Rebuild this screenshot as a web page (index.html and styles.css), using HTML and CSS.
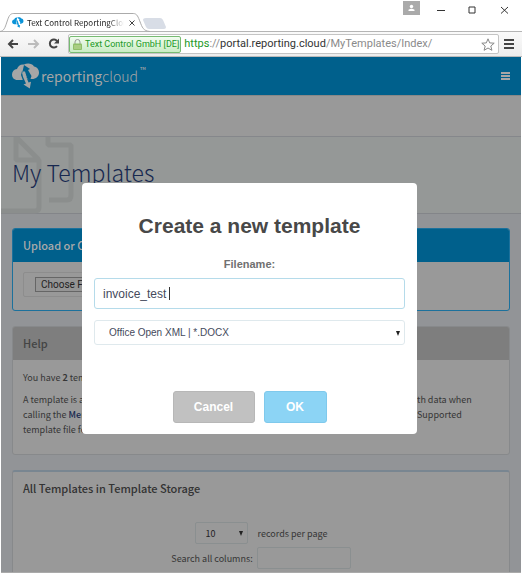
FILE: index.html
```html
<!DOCTYPE html>
<html lang="en">
<head>
<meta charset="utf-8">
<title>Text Control ReportingCloud</title>
<link rel="stylesheet" href="styles.css">
</head>
<body>
<svg class="defs" aria-hidden="true">
  <symbol id="logo" viewBox="0 0 28 26">
    <path d="M5.500 17 C2 17 0 14.500 0 11.500 C0 8.500 2 6.300 5 6 C6 3 8.500 1 12 1.500 C15 0 20 0 22 3.500 C25 4 27 6.500 27 9.500 C27 13.500 24 16 20 16 H17 L14 17Z"/>
    <path fill="currentColor" d="M10.500 8.500 L12 2 L18 6 L16 7 L19.500 13 L18 17.500 L15 15 L13 8.500Z"/>
    <path fill="currentColor" d="M11 17.500 L9 12 L10 8 L13.500 13 L17 17.500Z"/>
    <path d="M10 9.500 L12 9 L14 13 L16.500 19.500 L19 18.800 L17.800 25.500 L11.500 21.500 L14 20.500 L11 14Z"/>
  </symbol>
</svg>
<header class="browser">
  <div class="tabs">
    <div class="tab">
      <svg class="tab-shape" viewBox="0 0 152 19" preserveAspectRatio="none"><path d="M0 18.500 C4 18 5 15 7 9 S10 .5 14 .5 H135 C139 .5 140 4 142 9 S145 18 152 18.500"/></svg>
      <svg class="tab-logo"><use href="#logo"/></svg>
      <span class="tab-name">Text Control ReportingCloud</span>
      <svg class="tab-close" viewBox="0 0 6 6"><path d="M.5 .5 L5.500 5.500 M5.500 .5 L.5 5.500"/></svg>
    </div>
    <svg class="newtab" viewBox="0 0 23 11"><path d="M3 0 H17 Q19 0 20 2 L23 9 Q23 11 21 11 H6 Q4 11 3 9 L0 2 Q0 0 3 0"/></svg>
    <div class="window">
      <svg class="person" viewBox="0 0 17 14"><rect width="17" height="14"/><circle cx="8.500" cy="5.500" r="1.700"/><path d="M5.500 10 V8.800 Q8.500 6.500 11.500 8.800 V10Z"/></svg>
      <svg class="controls" viewBox="0 0 73 8"><path d="M0 4.500 H8 M32 1 H38 V7 H32Z M64 1 L71 7.500 M71 1 L64 7.500"/></svg>
    </div>
  </div>
  <div class="toolbar">
    <svg class="nav" viewBox="0 0 54 14"><path class="dark" d="M11 7 H2 M6 3 L2 7 L6 11"/><path class="pale" d="M21 7 H31 M27 3 L31 7 L27 11"/><path class="dark" d="M50 4 A4 4 0 1 0 50 9"/><path class="fill" d="M47 6.500 H52 V1.500Z"/></svg>
    <div class="address">
      <div class="cert"><svg class="lock" viewBox="0 0 9 11"><path class="shackle" d="M2 5 V3 A2.500 2.500 0 0 1 7 3 V5"/><rect y="4.500" width="9" height="6.500" rx="1"/><path class="line" d="M1 7 H8 M1 9 H8"/></svg>Text Control GmbH [DE]</div>
      <span class="url"><span class="secure">https</span>://<b>portal.reporting.cloud</b>/MyTemplates/Index/</span>
      <svg class="star" viewBox="0 0 14 13"><path d="M7 .8 L8.700 4.900 L13.200 5.200 L9.800 8 L10.900 12.300 L7 10 L3.100 12.300 L4.200 8 L.8 5.200 L5.300 4.900Z"/></svg>
    </div>
    <svg class="menu" viewBox="0 0 10 10"><path d="M0 1 H10 M0 5 H10 M0 9 H10"/></svg>
  </div>
</header>
<div class="page">
  <div class="brand">
    <svg class="brand-logo"><use href="#logo"/></svg>
    <span class="brand-name">reporting<span>cloud</span></span><span class="tm">™</span>
    <svg class="burger" viewBox="0 0 9 8"><path d="M0 1 H9 M0 4 H9 M0 7 H9"/></svg>
  </div>
  <div class="strip"></div>
  <div class="hero">
    <svg class="papers" viewBox="0 0 74 77"><path d="M15 0 V23 H38 V70 Q38 74 34 74 H0 M15 0 L38 23 M47 0 V8 H70 V58 Q70 63 66 63 H48"/></svg>
    <h1>My Templates</h1>
  </div>
  <main>
    <section class="card upload">
      <h2>Upload or Create Template</h2>
      <div class="card-body"><div class="file-box"><button type="button">Choose File</button></div></div>
    </section>
    <section class="card help">
      <h2>Help</h2>
      <div class="card-body">
        <p>You have <b>2</b> templates.</p>
        <div class="lines"><p><span>A template is a document that can be merged</span><span>th data when</span></p>
        <p><span>calling the <a href="#">Merge</a> endpoint of the Web API.</span><span>Supported</span></p>
        <p><span>template file formats are DOCX and TX.</span></p></div>
      </div>
    </section>
    <section class="card storage">
      <h2>All Templates in Template Storage</h2>
      <div class="row"><div class="pick"><select id="records"><option>10</option></select></div><label for="records">records per page</label></div>
      <div class="row search"><label for="search">Search all columns:</label><input id="search" type="text"></div>
    </section>
  </main>
  <div class="overlay">
    <form class="dialog">
      <h2>Create a new template</h2>
      <label for="filename">Filename:</label>
      <div class="field"><input id="filename" type="text" value="invoice_test"><i class="caret"></i></div>
      <div class="pick"><select aria-label="File format"><option>Office Open XML | *.DOCX</option></select></div>
      <div class="actions"><button type="button" class="cancel">Cancel</button><button type="button" class="ok">OK</button></div>
    </form>
  </div>
</div>
</body>
</html>
```
FILE: styles.css
```css
* { box-sizing: border-box; }
body { margin: 0; height: 100vh; overflow: hidden; display: flex; flex-direction: column; background: #fff; font-family: "Noto Sans CJK JP", sans-serif; font-size: 11px; color: #363636; }
h1, h2, p { margin: 0; }
svg { display: block; flex: none; fill: none; }
.defs { position: absolute; width: 0; height: 0; }
.browser { flex: none; }
.tabs { display: flex; align-items: flex-start; height: 32px; border-bottom: 1px solid #b5b5b5; }
.tab { position: relative; display: flex; align-items: center; width: 150px; height: 19px; margin-top: 13px; padding-left: 12px; }
.tab-shape { position: absolute; left: 0; top: 0; width: 100%; height: 19px; stroke: #aaa; }
.tab-logo { width: 12px; height: 11px; fill: #0a93d8; color: #fff; }
.tab-name { width: 97px; margin-left: 3px; font-size: 8px; line-height: 12px; color: #222; white-space: nowrap; overflow: hidden; -webkit-mask-image: linear-gradient(90deg, #000 84%, transparent); mask-image: linear-gradient(90deg, #000 84%, transparent); }
.tab-close { width: 6px; height: 6px; margin-left: 5px; stroke: #444; }
.newtab { width: 23px; height: 11px; margin: 18px 0 0 -7px; fill: #d8dde6; }
.window { display: flex; align-items: flex-start; margin-left: auto; padding: 1px 12px 0 0; gap: 17px; }
.person { width: 17px; height: 14px; fill: #fff; }
.person rect { fill: #aaa; }
.controls { width: 73px; height: 8px; margin-top: 5px; stroke: #333; }
.toolbar { display: flex; align-items: center; height: 25px; padding: 0 8px 0 7px; background: linear-gradient(#fafafa, #ededed); border-bottom: 1px solid #bbb; }
.nav { width: 54px; height: 14px; margin-right: 7px; stroke-width: 2; }
.dark { stroke: #444; }
.pale { stroke: #bbb; }
.fill { fill: #444; }
.address { display: flex; align-items: center; flex: 1; height: 20px; min-width: 0; background: #fff; border: 1px solid #c4c4c4; border-radius: 2px; padding-right: 3px; }
.cert { display: flex; align-items: center; gap: 3px; height: 17px; padding: 0 1px 0 3px; color: #219a26; font-family: Roboto, sans-serif; font-size: 9px; line-height: 14px; white-space: nowrap; background: linear-gradient(#f2fcf0, #c9ecc4); border: 1px solid #77bb72; border-radius: 2px; }
.lock { width: 9px; height: 11px; fill: #8fbf68; }
.lock path { fill: none; }
.shackle { stroke: #999; }
.line { stroke: #c3dc9d; }
.url { flex: 1; margin-left: 3px; font-family: Roboto, sans-serif; font-size: 11px; line-height: 16px; color: #8a8a8a; white-space: nowrap; }
.url b { font-weight: 400; color: #333; }
.secure { color: #219a26; }
.star { width: 14px; height: 13px; stroke: #888; }
.menu { width: 10px; height: 10px; margin-left: 5px; stroke: #444; stroke-width: 2; }
.page { position: relative; flex: 1; min-height: 0; overflow: hidden; margin: 0 1px; background: #929497; border-bottom: 1px solid #aaa; }
.brand { display: flex; align-items: center; height: 38px; padding: 0 11px; background: #00608c; color: #a6a6a6; }
.brand-logo { width: 28px; height: 26px; fill: #a6a6a6; color: #00608c; }
.brand-name { margin-left: 1px; font-size: 14px; line-height: 20px; }
.brand-name span { font-weight: 300; }
.tm { align-self: flex-start; margin: 7px 0 0 2px; font-size: 8px; line-height: 12px; }
.burger { width: 9px; height: 8px; margin-left: auto; stroke: #a6a6a6; stroke-width: 2; }
.strip { height: 42px; background: #999; border-top: 1px solid #888; border-bottom: 1px solid #85878b; }
.hero { position: relative; height: 77px; padding: 17px 11px; background: #959897; border-bottom: 1px solid #838589; }
.papers { position: absolute; left: 0; top: 0; width: 74px; height: 77px; stroke: #8b8e8d; stroke-width: 5; stroke-linejoin: bevel; }
h1 { position: relative; font-size: 23px; line-height: 36px; font-weight: 300; color: #172850; }
main { display: flex; flex-direction: column; gap: 15px; padding: 14px 11px 0; }
.card { background: #999; border: 1px solid #87898b; border-radius: 3px; overflow: hidden; }
.card h2 { padding: 0 10px; font-size: 11px; line-height: 33px; font-weight: 500; }
.upload { border-color: #1c719c; }
.upload h2 { background: #00608c; color: #aaa; }
.card-body { padding: 10px; }
.file-box { width: 60%; height: 25px; padding: 4px 11px; border: 1px solid #8d8d8d; border-radius: 2px; }
.upload .card-body { height: 48px; }
.file-box button { display: block; height: 15px; padding: 0 5px; background: #959595; border: 1px solid #666; font: 10px/12px Roboto, sans-serif; color: #222; }
.help h2 { background: #7e7e7e; color: #444; }
.help .card-body { height: 94px; font-size: 9px; line-height: 15px; }
.lines { margin-top: 7px; }
.lines p { display: flex; justify-content: space-between; }
.lines p span:last-child:not(:first-child) { width: 82px; white-space: nowrap; }
.help a { color: #172850; font-weight: 500; text-decoration: none; }
.storage { height: 140px; border-top: 2px solid #798691; }
.storage h2 { color: #333; }
.pick { position: relative; display: flex; }
.pick::after { content: ""; position: absolute; right: 5px; top: 50%; margin-top: -2px; border: solid transparent; border-width: 5px 2px 0; border-top-color: #222; pointer-events: none; }
select { appearance: none; width: 100%; background: none; }
.row { display: flex; justify-content: center; align-items: center; gap: 10px; margin-top: 17px; font-size: 9px; }
.row .pick { width: 53px; }
.row select { height: 22px; padding: 0 10px; font: 9px "Noto Sans CJK JP", sans-serif; }
.row select, .row input { color: #222; border: 1px solid #8a8f90; border-radius: 2px; }
.row input { width: 94px; height: 22px; background: #999; }
.search { gap: 4px; margin-top: 3px; }
.overlay { position: absolute; inset: 0; padding: 126px 104px 0 81px; }
.dialog { display: flex; flex-direction: column; height: 251px; padding: 25px 12px 11px; background: #fff; border-radius: 4px; font-family: "Liberation Sans", sans-serif; text-align: center; }
.dialog h2 { font-size: 21px; line-height: 36px; color: #484848; }
.dialog label { margin-top: 12px; font-size: 11px; line-height: 16px; font-weight: 700; color: #707070; }
.field { position: relative; margin-top: 6px; }
.field input { display: block; width: 100%; height: 31px; padding: 0 8px; border: 1px solid #b5dbea; border-radius: 3px; font: 12px "Liberation Sans", sans-serif; color: #454a5c; outline: none; }
.caret { position: absolute; left: 75px; top: 9px; width: 1px; height: 13px; background: #333; }
.dialog .pick { margin-top: 11px; }
.dialog select { height: 25px; padding: 0 14px; border: 1px solid #dfe9ed; border-radius: 3px; font: 10px "Liberation Sans", sans-serif; color: #454a5c; }
.actions { display: flex; justify-content: center; gap: 9px; margin-top: auto; }
.actions button { height: 32px; border: 1px solid #b7b7b7; border-radius: 3px; color: #fff; font: 700 12px "Liberation Sans", sans-serif; }
.actions .cancel { width: 82px; background: #c1c1c1; }
.actions .ok { width: 63px; background: #8cd4f5; border-color: #7fc9ec; }
```
